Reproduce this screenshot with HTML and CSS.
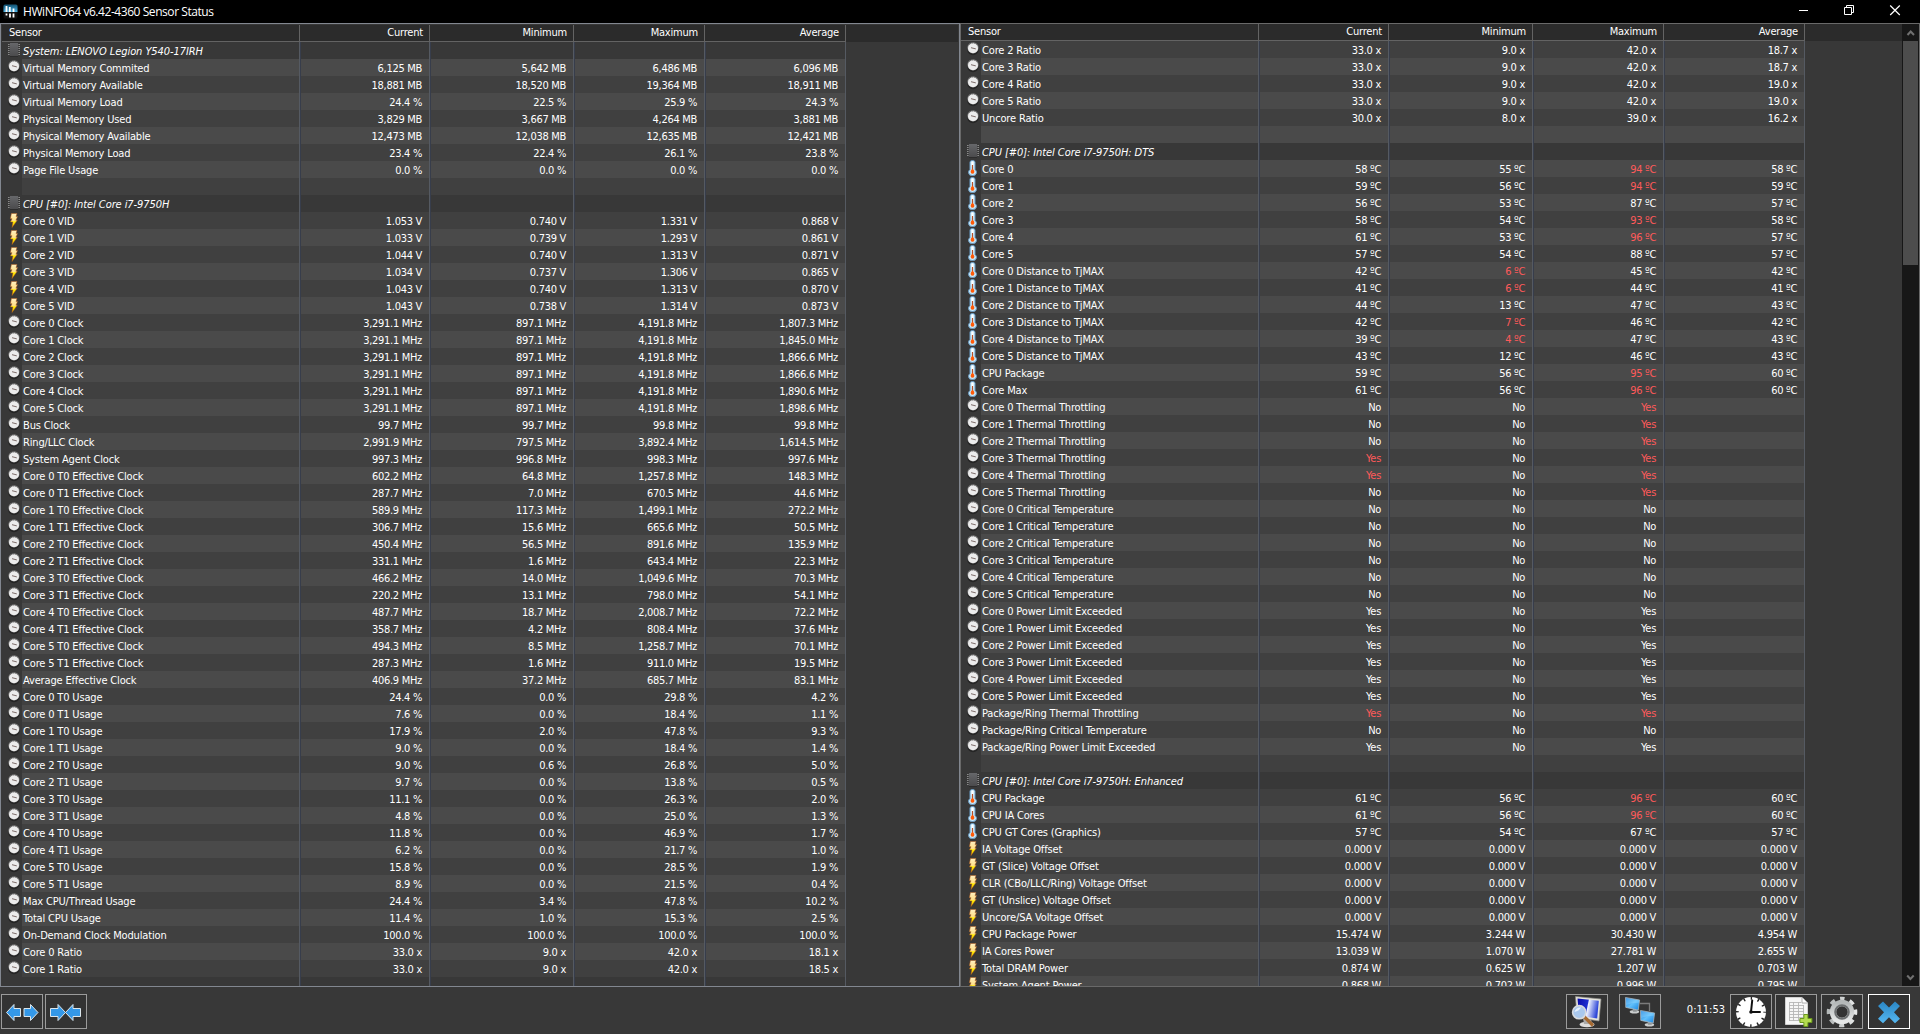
FILE: index.html
```
<!DOCTYPE html>
<html lang="en">
<head>
    <meta charset="UTF-8">
    <meta name="viewport" content="width=device-width, initial-scale=1.0">
    <title>HWiNFO64 v6.42-4360 Sensor Status</title>
    <link rel="stylesheet" href="styles.css">
</head>
<body>
    <!-- Shared icons and gradients -->
    <svg class="defs" width="0" height="0">
        <defs>
            <linearGradient id="bolt-fill" x1="0" y1="0" x2="0" y2="1">
                <stop offset="0" stop-color="#fff0c0"/>
                <stop offset="0.5" stop-color="#ffe08a"/>
                <stop offset="0.6" stop-color="#fff200"/>
                <stop offset="1" stop-color="#ffc400"/>
            </linearGradient>
            <linearGradient id="chip-fill" x1="0" y1="0" x2="0" y2="1">
                <stop offset="0" stop-color="#66676a"/>
                <stop offset="1" stop-color="#4b4b4d"/>
            </linearGradient>
            <linearGradient id="screen-fill" x1="0" y1="0" x2="1" y2="1">
                <stop offset="0" stop-color="#1477d8"/>
                <stop offset="0.5" stop-color="#62c0fb"/>
                <stop offset="1" stop-color="#1583e2"/>
            </linearGradient>
            <linearGradient id="navy-fill" x1="0" y1="0" x2="1" y2="0.2">
                <stop offset="0" stop-color="#0a0aa8"/>
                <stop offset="0.5" stop-color="#1d2ed0"/>
                <stop offset="0.55" stop-color="#f0f4ff"/>
                <stop offset="1" stop-color="#3048d8"/>
            </linearGradient>
            <linearGradient id="gear-fill" x1="0" y1="0" x2="0" y2="1">
                <stop offset="0" stop-color="#b4b8b8"/>
                <stop offset="1" stop-color="#e6e8e8"/>
            </linearGradient>
            <linearGradient id="close-fill" x1="0" y1="0" x2="0" y2="1">
                <stop offset="0" stop-color="#2a86c4"/>
                <stop offset="1" stop-color="#56b8f2"/>
            </linearGradient>
            <linearGradient id="app-fill" x1="0" y1="0" x2="0" y2="1">
                <stop offset="0" stop-color="#10506f"/>
                <stop offset="1" stop-color="#4fb4e6"/>
            </linearGradient>
        </defs>
        <symbol id="gauge" viewBox="0 0 16 16">
            <ellipse cx="8" cy="8.4" rx="5.8" ry="5.9" fill="#252525"/>
            <circle cx="8" cy="6.8" r="5.6" fill="#858585"/>
            <circle cx="8" cy="7.2" r="5" fill="#ececec"/>
            <path d="M4 3.8A5 5 0 0 1 12 3.8" stroke="#555" stroke-width="0.9" fill="none" stroke-dasharray="1 0.8"/>
            <path d="M6 6.7L10.8 7.9" stroke="#6f5d5a" stroke-width="0.9"/>
        </symbol>
        <symbol id="chip" viewBox="0 0 16 16">
            <path d="M2.8 2V14M13.2 2V14" stroke="#8a8a8a" stroke-width="1.6" stroke-dasharray="1 1"/>
            <rect x="4" y="1" width="8" height="13" fill="url(#chip-fill)"/>
            <path d="M4 14.5h8" stroke="#2c2c2c" stroke-width="1"/>
        </symbol>
        <symbol id="bolt" viewBox="0 0 16 16">
            <path d="M5.4 1.5H11L10 4.6H11.6L9.9 8.2H11.3L6 15.5L6.9 10H4.5L6 6.7H4.4Z" fill="url(#bolt-fill)" stroke="#b0581a" stroke-width="0.5"/>
        </symbol>
        <symbol id="thermo" viewBox="0 0 16 16">
            <path d="M5 2.2Q5 0.5 7.5 0.5Q10 0.5 10 2.2V9.6Q11.5 10.8 11.5 12.4Q11.3 15.6 7.5 15.6Q3.7 15.6 3.5 12.4Q3.5 10.8 5 9.6Z" fill="#c9eafb" stroke="#6a9cc4" stroke-width="1"/>
            <rect x="6.5" y="1.6" width="2" height="5" fill="#fff"/>
            <path d="M7.5 5V12" stroke="#b5522c" stroke-width="1.2"/>
            <path d="M7.5 8.6L9.2 10.8Q9.8 13.6 7.5 13.8Q5.2 13.6 5.8 10.8Z" fill="#ff5a08"/>
        </symbol>
        <symbol id="monitor" viewBox="0 0 20 18">
            <ellipse cx="11" cy="15.6" rx="5" ry="1.9" fill="#c9cccd"/>
            <path d="M9 12L13 12.5L13.5 15.5H9.5Z" fill="#8f9496"/>
            <path d="M1.5 0.5L16.5 3.2L15 13.8L1.8 11Z" fill="url(#screen-fill)" stroke="#aeb9bf" stroke-width="0.8"/>
            <path d="M2 1L16 3.6L15.6 6Q8 6 2 8.5Z" fill="#9ddcff" opacity="0.35"/>
        </symbol>
    </svg>

    <div class="window">
        <!-- Title Bar -->
        <div class="title-bar">
            <svg class="app-icon" width="15" height="15" viewBox="0 0 15 15">
                <rect x="0.5" y="0.5" width="14" height="14" rx="1.5" fill="#111"/>
                <path d="M0.5 2Q0.5 0.5 2 0.5H13Q14.5 0.5 14.5 2V8H0.5Z" fill="url(#app-fill)"/>
                <path d="M3.5 2V8M6.8 3V8M10.5 4.5V8M3.5 9.5V11.5M7 9.5V13.5M10.5 9.5V13.5" stroke="#fff" stroke-width="1.8"/>
            </svg>
            <span class="title">HWiNFO64 v6.42-4360 Sensor Status</span>
            <div class="window-buttons">
                <svg width="46" height="22" viewBox="0 0 46 22"><path d="M19 10.5H28" stroke="#fff"/></svg>
                <svg width="46" height="22" viewBox="0 0 46 22"><path d="M18.5 7.5H25.5V14.5H18.5ZM20.5 7.5V5.5H27.5V12.5H25.5" fill="none" stroke="#fff"/></svg>
                <svg width="46" height="22" viewBox="0 0 46 22"><path d="M18.2 5.5L27.8 15M27.8 5.5L18.2 15" stroke="#fff" stroke-width="1.2"/></svg>
            </div>
        </div>

        <!-- Sensor Lists -->
        <div class="panes">
            <div class="pane left-pane">
                <div class="list">
                    <div class="list-header">
                        <span>Sensor</span><span>Current</span><span>Minimum</span><span>Maximum</span><span>Average</span>
                    </div>
                    <div class="rows" id="left-rows"></div>
                </div>
            </div>
            <div class="pane right-pane">
                <div class="list">
                    <div class="list-header">
                        <span>Sensor</span><span>Current</span><span>Minimum</span><span>Maximum</span><span>Average</span>
                    </div>
                    <div class="rows" id="right-rows"></div>
                </div>
                <div class="scrollbar">
                    <svg width="17" height="17" viewBox="0 0 17 17"><path d="M5.5 11L8.7 7.5L12 11" fill="none" stroke="#707070" stroke-width="2"/></svg>
                    <div class="thumb"></div>
                    <svg class="down" width="17" height="17" viewBox="0 0 17 17"><path d="M5.2 6.5L8.4 10L11.7 6.5" fill="none" stroke="#707070" stroke-width="2"/></svg>
                </div>
            </div>
        </div>

        <!-- Toolbar -->
        <div class="toolbar">
            <button class="tool">
                <svg width="40" height="33" viewBox="0 0 40 33">
                    <path d="M4.5 17.5L12 9.5V13.5H18.5V21.5H12V25.5ZM36 17.5L28.5 9.5V13.5H22V21.5H28.5V25.5Z" fill="#3498e8" stroke="#dce6ec" stroke-width="1"/>
                </svg>
            </button>
            <button class="tool">
                <svg width="40" height="33" viewBox="0 0 40 33">
                    <path d="M19.5 17.5L12 9.5V13.5H4.5V21.5H12V25.5ZM19.5 17.5L27 9.5V13.5H34.5V21.5H27V25.5Z" fill="#3498e8" stroke="#dce6ec" stroke-width="1"/>
                </svg>
            </button>
            <div class="tools-right">
                <button class="tool">
                    <svg width="40" height="33" viewBox="0 0 40 33">
                        <ellipse cx="20" cy="29.5" rx="7.5" ry="2.8" fill="#dcdcdc"/>
                        <path d="M16 23L24 23.5L25 29H17Z" fill="#aaa"/>
                        <path d="M8.5 1.5L34 4L32 26L10 22.5Z" fill="#e6e5dc" stroke="#8d8d88" stroke-width="0.7"/>
                        <path d="M10.5 3.5L31.8 5.8L30.2 23.6L12 20.8Z" fill="url(#navy-fill)"/>
                        <path d="M17.5 22L26 30.5" stroke="#a66a32" stroke-width="3.2"/>
                        <circle cx="12.2" cy="17.2" r="6.6" fill="#a9c8ee" stroke="#d7dade" stroke-width="1.6"/>
                        <path d="M7.5 17Q9 12 14 12.5Q12 16 7.5 17Z" fill="#e8f2fd"/>
                    </svg>
                </button>
                <button class="tool network">
                    <svg width="40" height="33" viewBox="0 0 40 33">
                        <path d="M20 8.5H29.5V16" fill="none" stroke="#7b7b7b" stroke-width="1.3"/>
                        <use href="#monitor" x="4" y="2" width="19" height="17"/>
                        <use href="#monitor" x="19" y="15" width="19" height="17"/>
                    </svg>
                </button>
                <span class="uptime">0:11:53</span>
                <button class="tool">
                    <svg width="40" height="33" viewBox="0 0 40 33">
                        <circle cx="20" cy="17" r="15" fill="#fff"/>
                        <circle cx="20" cy="17" r="13.6" fill="none" stroke="#222" stroke-width="2.8" stroke-dasharray="1.4 5.72" stroke-dashoffset="0.7"/>
                        <path d="M20 17L21.2 5.5M20 17H29" stroke="#111" stroke-width="2" stroke-linecap="round"/>
                        <circle cx="20" cy="17" r="1.8" fill="#111"/>
                    </svg>
                </button>
                <button class="tool log">
                    <svg width="40" height="33" viewBox="0 0 40 33">
                        <path d="M9.5 2.5H26L31.5 8V29.5H9.5Z" fill="#f6f6f6" stroke="#d0d0d0"/>
                        <path d="M26 2.5V8H31.5" fill="#fff" stroke="#999" stroke-width="0.8"/>
                        <path d="M13 7.5H25M13 10.5H28M13 13.5H28M13 16.5H28M13 19.5H28M13 22.5H28M13 25.5H28M13.5 7V26M17.5 7V26M22.5 7V26M27.5 10V26" fill="none" stroke="#b5b5b5" stroke-width="0.9"/>
                        <path d="M27.9 19.5H31.9V23.5H35.9V27.5H31.9V31.5H27.9V27.5H23.9V23.5H27.9Z" fill="#b4dc50" stroke="#6a981c" stroke-width="1"/>
                    </svg>
                </button>
                <button class="tool settings">
                    <svg width="40" height="33" viewBox="0 0 40 33">
                        <circle cx="20" cy="17" r="13.2" fill="none" stroke="url(#gear-fill)" stroke-width="4.2" stroke-dasharray="5 5.37" stroke-dashoffset="2.5" transform="rotate(-90 20 17)"/>
                        <circle cx="20" cy="17" r="9" fill="none" stroke="url(#gear-fill)" stroke-width="6.4"/>
                        <circle cx="20" cy="17" r="6.8" fill="none" stroke="#6c6f70" stroke-width="2"/>
                    </svg>
                </button>
                <button class="tool close">
                    <svg width="40" height="33" viewBox="0 0 40 33">
                        <path d="M14 6.5L20 12.5L26 6.5L31 11L25 17.3L31 23.8L26 28.3L20 22.3L14 28.3L9 23.8L15 17.3L9 11Z" fill="url(#close-fill)"/>
                    </svg>
                </button>
            </div>
        </div>
    </div>

    <script src="script.js"></script>
</body>
</html>
```
FILE: styles.css
```
* {
    margin: 0;
    padding: 0;
    box-sizing: border-box;
}

body {
    background: #383838;
    color: #fff;
    font-family: "DejaVu Sans Condensed", "DejaVu Sans", Tahoma, sans-serif;
    font-size: 11px;
    letter-spacing: -0.2px;
    overflow: hidden;
}

.defs {
    position: absolute;
}

.window {
    display: flex;
    flex-direction: column;
    height: 100vh;
}

/* Title Bar */
.title-bar {
    display: flex;
    align-items: flex-start;
    height: 23px;
    background: #000;
    padding-left: 3px;
}

.app-icon {
    margin-top: 4px;
}

.title {
    margin-left: 5px;
    font-family: "Open Sans", sans-serif;
    font-size: 12px;
    line-height: 23px;
    letter-spacing: -0.44px;
}

.window-buttons {
    display: flex;
    margin-left: auto;
    margin-right: 2px;
}

/* Sensor Lists */
.panes {
    display: flex;
    height: 964px;
}

.pane {
    width: 960px;
    display: flex;
    overflow: hidden;
}

.left-pane {
    border: 1px solid #828790;
    padding: 1px 1px 0;
}

.right-pane {
    border: 1px solid #696969;
}

.list {
    flex: 1;
    display: flex;
    flex-direction: column;
}

.list-header {
    display: grid;
    grid-template-columns: 298px 130px 144px 131px 141px;
    height: 17px;
    background: #2b2b2b;
    line-height: 16px;
}

.list-header span {
    border-right: 1px solid #636363;
    border-bottom: 1px solid #636363;
    text-align: right;
    padding-right: 6px;
}

.list-header span:first-child {
    text-align: left;
    padding-left: 7px;
}

.rows {
    flex: 1;
    overflow: hidden;
}

.row {
    display: grid;
    grid-template-columns: 20px 278px 130px 144px 131px 141px;
    height: 17px;
    line-height: 17px;
    white-space: pre;
}

.row svg {
    display: block;
    width: 16px;
    height: 16px;
    margin-left: 4px;
}

.row span {
    height: 17px;
    padding-top: 1px;
    padding-right: 7px;
    background: #404040;
    border-left: 1px solid #373d4b;
    border-right: 1px solid #555a62;
    text-align: right;
    letter-spacing: -0.3px;
}

.row:nth-child(even) span {
    background: #4a4a4a;
}

.row .name {
    text-align: left;
    padding-left: 1px;
    border-left: none;
    letter-spacing: -0.16px;
}

.row.group span,
.row.filler span {
    background: #383838;
}

.row.group .name {
    font-style: italic;
    letter-spacing: -0.08px;
}

.row .hot {
    color: #ff5a5a;
}

/* Scrollbar */
.scrollbar {
    width: 17px;
    background: #171717;
    display: flex;
    flex-direction: column;
}

.thumb {
    height: 224px;
    margin: 0 1px;
    background: #4d4d4d;
}

.scrollbar .down {
    margin-top: auto;
}

/* Toolbar */
.toolbar {
    flex: 1;
    display: flex;
    align-items: flex-start;
    gap: 2px;
    padding: 7px 10px 0 1px;
    background: #383838;
}

.tool {
    width: 42px;
    height: 35px;
    background: #333;
    border: 1px solid #9b9b9b;
}

.tool svg {
    display: block;
}

.tools-right {
    display: flex;
    margin-left: auto;
}

.network {
    margin-left: 11px;
}

.uptime {
    width: 69px;
    padding-right: 5px;
    line-height: 32px;
    text-align: right;
    letter-spacing: 0;
}

.log {
    margin-left: 3px;
}

.settings {
    margin-left: 4px;
}

.close {
    margin-left: 5px;
    border-color: #fff;
}
```
FILE: script.js
```
// icon | name | current | minimum | maximum | average
// A leading "!" marks a value over its limit
const leftSensors = `
chip|System: LENOVO Legion Y540-17IRH
gauge|Virtual Memory Commited|6,125 MB|5,642 MB|6,486 MB|6,096 MB
gauge|Virtual Memory Available|18,881 MB|18,520 MB|19,364 MB|18,911 MB
gauge|Virtual Memory Load|24.4 %|22.5 %|25.9 %|24.3 %
gauge|Physical Memory Used|3,829 MB|3,667 MB|4,264 MB|3,881 MB
gauge|Physical Memory Available|12,473 MB|12,038 MB|12,635 MB|12,421 MB
gauge|Physical Memory Load|23.4 %|22.4 %|26.1 %|23.8 %
gauge|Page File Usage|0.0 %|0.0 %|0.0 %|0.0 %
-
chip|CPU [#0]: Intel Core i7-9750H
bolt|Core 0 VID|1.053 V|0.740 V|1.331 V|0.868 V
bolt|Core 1 VID|1.033 V|0.739 V|1.293 V|0.861 V
bolt|Core 2 VID|1.044 V|0.740 V|1.313 V|0.871 V
bolt|Core 3 VID|1.034 V|0.737 V|1.306 V|0.865 V
bolt|Core 4 VID|1.043 V|0.740 V|1.313 V|0.870 V
bolt|Core 5 VID|1.043 V|0.738 V|1.314 V|0.873 V
gauge|Core 0 Clock|3,291.1 MHz|897.1 MHz|4,191.8 MHz|1,807.3 MHz
gauge|Core 1 Clock|3,291.1 MHz|897.1 MHz|4,191.8 MHz|1,845.0 MHz
gauge|Core 2 Clock|3,291.1 MHz|897.1 MHz|4,191.8 MHz|1,866.6 MHz
gauge|Core 3 Clock|3,291.1 MHz|897.1 MHz|4,191.8 MHz|1,866.6 MHz
gauge|Core 4 Clock|3,291.1 MHz|897.1 MHz|4,191.8 MHz|1,890.6 MHz
gauge|Core 5 Clock|3,291.1 MHz|897.1 MHz|4,191.8 MHz|1,898.6 MHz
gauge|Bus Clock|99.7 MHz|99.7 MHz|99.8 MHz|99.8 MHz
gauge|Ring/LLC Clock|2,991.9 MHz|797.5 MHz|3,892.4 MHz|1,614.5 MHz
gauge|System Agent Clock|997.3 MHz|996.8 MHz|998.3 MHz|997.6 MHz
gauge|Core 0 T0 Effective Clock|602.2 MHz|64.8 MHz|1,257.8 MHz|148.3 MHz
gauge|Core 0 T1 Effective Clock|287.7 MHz|7.0 MHz|670.5 MHz|44.6 MHz
gauge|Core 1 T0 Effective Clock|589.9 MHz|117.3 MHz|1,499.1 MHz|272.2 MHz
gauge|Core 1 T1 Effective Clock|306.7 MHz|15.6 MHz|665.6 MHz|50.5 MHz
gauge|Core 2 T0 Effective Clock|450.4 MHz|56.5 MHz|891.6 MHz|135.9 MHz
gauge|Core 2 T1 Effective Clock|331.1 MHz|1.6 MHz|643.4 MHz|22.3 MHz
gauge|Core 3 T0 Effective Clock|466.2 MHz|14.0 MHz|1,049.6 MHz|70.3 MHz
gauge|Core 3 T1 Effective Clock|220.2 MHz|13.1 MHz|798.0 MHz|54.1 MHz
gauge|Core 4 T0 Effective Clock|487.7 MHz|18.7 MHz|2,008.7 MHz|72.2 MHz
gauge|Core 4 T1 Effective Clock|358.7 MHz|4.2 MHz|808.4 MHz|37.6 MHz
gauge|Core 5 T0 Effective Clock|494.3 MHz|8.5 MHz|1,258.7 MHz|70.1 MHz
gauge|Core 5 T1 Effective Clock|287.3 MHz|1.6 MHz|911.0 MHz|19.5 MHz
gauge|Average Effective Clock|406.9 MHz|37.2 MHz|685.7 MHz|83.1 MHz
gauge|Core 0 T0 Usage|24.4 %|0.0 %|29.8 %|4.2 %
gauge|Core 0 T1 Usage|7.6 %|0.0 %|18.4 %|1.1 %
gauge|Core 1 T0 Usage|17.9 %|2.0 %|47.8 %|9.3 %
gauge|Core 1 T1 Usage|9.0 %|0.0 %|18.4 %|1.4 %
gauge|Core 2 T0 Usage|9.0 %|0.6 %|26.8 %|5.0 %
gauge|Core 2 T1 Usage|9.7 %|0.0 %|13.8 %|0.5 %
gauge|Core 3 T0 Usage|11.1 %|0.0 %|26.3 %|2.0 %
gauge|Core 3 T1 Usage|4.8 %|0.0 %|25.0 %|1.3 %
gauge|Core 4 T0 Usage|11.8 %|0.0 %|46.9 %|1.7 %
gauge|Core 4 T1 Usage|6.2 %|0.0 %|21.7 %|1.0 %
gauge|Core 5 T0 Usage|15.8 %|0.0 %|28.5 %|1.9 %
gauge|Core 5 T1 Usage|8.9 %|0.0 %|21.5 %|0.4 %
gauge|Max CPU/Thread Usage|24.4 %|3.4 %|47.8 %|10.2 %
gauge|Total CPU Usage|11.4 %|1.0 %|15.3 %|2.5 %
gauge|On-Demand Clock Modulation|100.0 %|100.0 %|100.0 %|100.0 %
gauge|Core 0 Ratio|33.0 x|9.0 x|42.0 x|18.1 x
gauge|Core 1 Ratio|33.0 x|9.0 x|42.0 x|18.5 x
=`;

const rightSensors = `
gauge|Core 2 Ratio|33.0 x|9.0 x|42.0 x|18.7 x
gauge|Core 3 Ratio|33.0 x|9.0 x|42.0 x|18.7 x
gauge|Core 4 Ratio|33.0 x|9.0 x|42.0 x|19.0 x
gauge|Core 5 Ratio|33.0 x|9.0 x|42.0 x|19.0 x
gauge|Uncore Ratio|30.0 x|8.0 x|39.0 x|16.2 x
-
chip|CPU [#0]: Intel Core i7-9750H: DTS
thermo|Core 0|58 ºC|55 ºC|!94 ºC|58 ºC
thermo|Core 1|59 ºC|56 ºC|!94 ºC|59 ºC
thermo|Core 2|56 ºC|53 ºC|87 ºC|57 ºC
thermo|Core 3|58 ºC|54 ºC|!93 ºC|58 ºC
thermo|Core 4|61 ºC|53 ºC|!96 ºC|57 ºC
thermo|Core 5|57 ºC|54 ºC|88 ºC|57 ºC
thermo|Core 0 Distance to TjMAX|42 ºC|!6 ºC|45 ºC|42 ºC
thermo|Core 1 Distance to TjMAX|41 ºC|!6 ºC|44 ºC|41 ºC
thermo|Core 2 Distance to TjMAX|44 ºC|13 ºC|47 ºC|43 ºC
thermo|Core 3 Distance to TjMAX|42 ºC|!7 ºC|46 ºC|42 ºC
thermo|Core 4 Distance to TjMAX|39 ºC|!4 ºC|47 ºC|43 ºC
thermo|Core 5 Distance to TjMAX|43 ºC|12 ºC|46 ºC|43 ºC
thermo|CPU Package|59 ºC|56 ºC|!95 ºC|60 ºC
thermo|Core Max|61 ºC|56 ºC|!96 ºC|60 ºC
gauge|Core 0 Thermal Throttling|No|No|!Yes|
gauge|Core 1 Thermal Throttling|No|No|!Yes|
gauge|Core 2 Thermal Throttling|No|No|!Yes|
gauge|Core 3 Thermal Throttling|!Yes|No|!Yes|
gauge|Core 4 Thermal Throttling|!Yes|No|!Yes|
gauge|Core 5 Thermal Throttling|No|No|!Yes|
gauge|Core 0 Critical Temperature|No|No|No|
gauge|Core 1 Critical Temperature|No|No|No|
gauge|Core 2 Critical Temperature|No|No|No|
gauge|Core 3 Critical Temperature|No|No|No|
gauge|Core 4 Critical Temperature|No|No|No|
gauge|Core 5 Critical Temperature|No|No|No|
gauge|Core 0 Power Limit Exceeded|Yes|No|Yes|
gauge|Core 1 Power Limit Exceeded|Yes|No|Yes|
gauge|Core 2 Power Limit Exceeded|Yes|No|Yes|
gauge|Core 3 Power Limit Exceeded|Yes|No|Yes|
gauge|Core 4 Power Limit Exceeded|Yes|No|Yes|
gauge|Core 5 Power Limit Exceeded|Yes|No|Yes|
gauge|Package/Ring Thermal Throttling|!Yes|No|!Yes|
gauge|Package/Ring Critical Temperature|No|No|No|
gauge|Package/Ring Power Limit Exceeded|Yes|No|Yes|
-
chip|CPU [#0]: Intel Core i7-9750H: Enhanced
thermo|CPU Package|61 ºC|56 ºC|!96 ºC|60 ºC
thermo|CPU IA Cores|61 ºC|56 ºC|!96 ºC|60 ºC
thermo|CPU GT Cores (Graphics)|57 ºC|54 ºC|67 ºC|57 ºC
bolt|IA Voltage Offset|0.000 V|0.000 V|0.000 V|0.000 V
bolt|GT (Slice) Voltage Offset|0.000 V|0.000 V|0.000 V|0.000 V
bolt|CLR (CBo/LLC/Ring) Voltage Offset|0.000 V|0.000 V|0.000 V|0.000 V
bolt|GT (Unslice) Voltage Offset|0.000 V|0.000 V|0.000 V|0.000 V
bolt|Uncore/SA Voltage Offset|0.000 V|0.000 V|0.000 V|0.000 V
bolt|CPU Package Power|15.474 W|3.244 W|30.430 W|4.954 W
bolt|IA Cores Power|13.039 W|1.070 W|27.781 W|2.655 W
bolt|Total DRAM Power|0.874 W|0.625 W|1.207 W|0.703 W
bolt|System Agent Power|0.868 W|0.702 W|0.996 W|0.795 W`;

function renderRows(id, data) {
    const rows = data.trim().split('\n').map(line => {
        const [icon, name = '', ...values] = line.split('|');
        // "-" is a spacer row, "=" the empty rest of the list
        const blank = icon === '-' || icon === '=';
        let type = '';
        if (icon === 'chip') type = ' group';
        if (icon === '=') type = ' filler';

        const cells = [0, 1, 2, 3].map(i => {
            const value = values[i] || '';
            const hot = value.startsWith('!');
            return `<span${hot ? ' class="hot"' : ''}>${value.replace('!', '')}</span>`;
        }).join('');

        return `<div class="row${type}">
            ${blank ? '<i></i>' : `<svg><use href="#${icon}"></use></svg>`}<span class="name">${name}</span>${cells}
        </div>`.replace(/\n\s*/g, '');
    });
    document.getElementById(id).innerHTML = rows.join('');
}

renderRows('left-rows', leftSensors);
renderRows('right-rows', rightSensors);
```
